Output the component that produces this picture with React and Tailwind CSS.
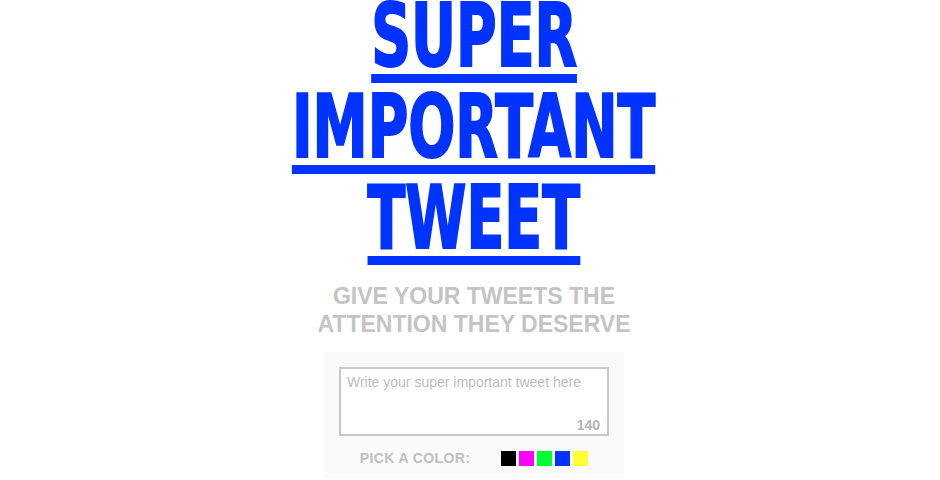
import React, { useState } from 'react';

const COLORS = ['#000000', '#ff00ff', '#00ff33', '#0033ff', '#ffff33'];

const headFont = { fontFamily: '"Liberation Sans Narrow", "DejaVu Sans Condensed", "Liberation Sans", sans-serif' };

const HeadLine = ({ children, color }) => (
    <div className="flex justify-center mb-[5px]">
        <span
            className="inline-block scale-x-[0.7] border-b-[9px] text-[88px] leading-[77px] font-bold [-webkit-text-stroke:2px_currentColor]"
            style={{ color, borderColor: color }}
        >
            {children}
        </span>
    </div>
);

const App = () => {
    const [tweet, setTweet] = useState('');
    const [color, setColor] = useState('#0033ff');

    return (
        <div className="w-[940px] h-[480px] overflow-hidden bg-white pl-[8px] flex flex-col items-center" style={{ fontFamily: '"Liberation Sans", Arial, sans-serif' }}>
            {/* Title */}
            <div className="mt-[-3px] w-full" style={headFont}>
                <HeadLine color={color}>SUPER</HeadLine>
                <HeadLine color={color}>IMPORTANT</HeadLine>
                <HeadLine color={color}>TWEET</HeadLine>
            </div>

            {/* Tagline */}
            <div className="mt-[12px] text-center text-[23px] leading-[28px] font-bold text-[#c4c4c4]">
                GIVE YOUR TWEETS THE<br />ATTENTION THEY DESERVE
            </div>

            {/* Composer */}
            <div className="mt-[14px] w-[300px] bg-[#fafafa] pt-[15px] px-[15px] pb-[12px] flex flex-col">
                <div className="relative">
                    <textarea
                        value={tweet}
                        maxLength={140}
                        onChange={(e) => setTweet(e.target.value)}
                        placeholder="Write your super important tweet here"
                        className="block w-[270px] h-[69px] resize-none border-2 border-[#c8c8c8] bg-white px-[6px] pt-[5px] text-[14px] leading-[17px] text-[#999] placeholder:text-[#bdbdbd] outline-none"
                    />
                    <span className="absolute right-[9px] bottom-[4px] text-[14px] leading-[14px] font-bold text-[#b4b4b4]">
                        {140 - tweet.length}
                    </span>
                </div>
                <div className="mt-[14px] flex items-center justify-center gap-[31px]">
                    <span className="text-[14px] leading-[16px] font-bold tracking-[0.4px] text-[#c0c0c0]">PICK A COLOR:</span>
                    <div className="flex gap-[3px]">
                        {COLORS.map(c => (
                            <button
                                key={c}
                                onClick={() => setColor(c)}
                                className="w-[15px] h-[15px]"
                                style={{ backgroundColor: c }}
                            />
                        ))}
                    </div>
                </div>
            </div>
        </div>
    );
};

export default App;
